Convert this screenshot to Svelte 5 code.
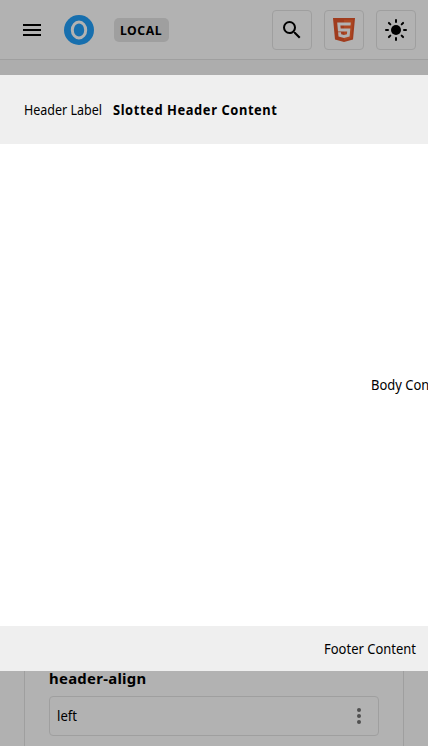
<script>
  const rays = [0, 45, 90, 135, 180, 225, 270, 315];
</script>

{#snippet label(text, width, size, weight, spacing = 0)}
  <svg class="label" {width} height="20" aria-label={text}>
    <text x="0" y="15" textLength={width} lengthAdjust="spacingAndGlyphs" font-size={size} font-weight={weight} letter-spacing={spacing}>{text}</text>
  </svg>
{/snippet}

<div class="page">
  <header>
    <svg class="menu" width="24" height="24" viewBox="0 0 24 24"><path d="M3 18h18v-2H3v2zm0-5h18v-2H3v2zm0-7v2h18V6H3z" /></svg>
    <svg class="logo" width="30" height="30" viewBox="0 0 30 30">
      <circle cx="15" cy="15" r="15" fill="#176fae" />
      <ellipse cx="15" cy="15" rx="6.7" ry="8" fill="none" stroke="#b2b2b2" stroke-width="3" />
    </svg>
    <div class="badge">{@render label('LOCAL', 42, 12.5, 700, 0.5)}</div>
    <div class="actions">
      <button aria-label="Search">
        <svg width="24" height="24" viewBox="0 0 24 24"><path d="M15.5 14h-.79l-.28-.27A6.471 6.471 0 0 0 16 9.5 6.5 6.5 0 1 0 9.5 16c1.61 0 3.09-.59 4.23-1.57l.27.28v.79l5 4.99L20.49 19l-4.99-5zm-6 0C7.01 14 5 11.99 5 9.5S7.01 5 9.5 5 14 7.01 14 9.5 11.99 14 9.5 14z" /></svg>
      </button>
      <button aria-label="HTML">
        <svg width="22" height="24" viewBox="0 0 22 24">
          <path d="M0 0h22l-2 21.5L11 24l-9-2.5z" fill="#a03c1e" />
          <path d="M11 1.8h9l-1.7 18.3L11 22.2z" fill="#ad4721" />
          <path d="M4.2 4.6h13.6l-.25 3H7.4l.25 2.9h9.7l-.75 8-5.6 1.6-5.5-1.6-.4-4.3h2.9l.2 2.1 2.8.8 2.9-.8.3-2.9H5z" fill="#b2b2b2" />
        </svg>
      </button>
      <button aria-label="Theme">
        <svg width="24" height="24" viewBox="0 0 24 24">
          <circle cx="12" cy="12" r="5" />
          {#each rays as angle}
            <path d="M12 2v2" stroke="#000" stroke-width="2" stroke-linecap="round" transform="rotate({angle} 12 12)" />
          {/each}
        </svg>
      </button>
    </div>
  </header>

  <section class="dialog">
    <div class="dialog-header">
      {@render label('Header Label', 78, 14, 400)}
      {@render label('Slotted Header Content', 164.5, 13.3, 700, 0.6)}
    </div>
    <div class="dialog-body">{@render label('Body Content', 83, 14, 400)}</div>
    <div class="dialog-footer">{@render label('Footer Content', 92, 14, 400)}</div>
  </section>

  <section class="card">
    {@render label('header-align', 97.5, 15, 700, 0.3)}
    <div class="select">
      {@render label('left', 20, 14, 400)}
      <svg width="24" height="24" viewBox="0 0 24 24" fill="#505050"><circle cx="12" cy="6" r="2" /><circle cx="12" cy="12" r="2" /><circle cx="12" cy="18" r="2" /></svg>
    </div>
  </section>
</div>

<style>
  .page { width: 100%; height: 746px; overflow: hidden; background: #b1b1b1; display: flex; flex-direction: column; font-family: "Noto Sans", sans-serif; }
  .page, .page * { box-sizing: border-box; }
  svg { display: block; flex: none; }
  .label { overflow: visible; }
  header { height: 60px; flex: none; display: flex; align-items: center; padding: 0 12px 0 20px; background: #b2b2b2; border-bottom: 1px solid #9f9f9f; }
  .logo { margin-left: 20px; }
  .badge { margin-left: 20px; width: 55px; height: 24px; padding: 2px 0 0 6px; border-radius: 5px; background: #9f9f9f; }
  .actions { margin-left: auto; display: flex; gap: 12px; }
  button { width: 40px; height: 40px; padding: 0; display: flex; align-items: center; justify-content: center; background: none; border: 1px solid #9f9f9f; border-radius: 4px; }
  .dialog { height: 611px; flex: none; display: flex; flex-direction: column; background: #fff; border-top: 15px solid #adadad; }
  .dialog-header { height: 69px; display: flex; align-items: center; gap: 10.5px; padding-left: 24px; background: #efefef; }
  .dialog-body { flex: 1; display: flex; align-items: center; padding-left: 370.5px; overflow: hidden; }
  .dialog-footer { height: 45px; display: flex; align-items: center; justify-content: flex-end; padding-right: 12.5px; background: #efefef; }
  .card { flex: 1; margin: 0 24px; padding: 0 24px; background: #b2b2b2; border: solid #9f9f9f; border-width: 0 1px; }
  .card > .label { margin-top: -2px; }
  .select { margin-top: 7px; height: 40px; display: flex; align-items: center; justify-content: space-between; padding: 0 7px; border: 1px solid #9f9f9f; border-radius: 4px; }
  .select .label { margin-top: -1px; }
</style>
